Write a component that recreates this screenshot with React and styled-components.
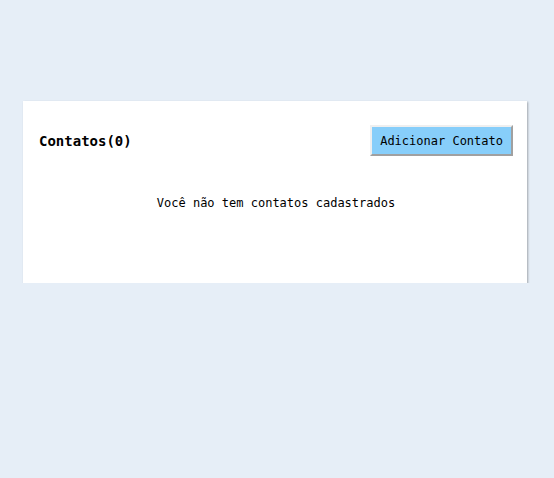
import React, { useState } from "react";
import styled, { createGlobalStyle } from "styled-components";

const GlobalStyle = createGlobalStyle`
  html, body {
    margin: 0;
    background-color: #e6eef7;
    font-family: "DejaVu Sans Mono", monospace;
  }
`;

const Page = styled.div`
  padding: 101px 27px 0 23px;
`;

const Card = styled.div`
  background-color: #ffffff;
  box-shadow: 1px 1px 2px rgba(0, 0, 0, 0.3);
  padding: 24px 14px 0 16px;
  height: 158px;
`;

const Header = styled.div`
  display: flex;
  justify-content: space-between;
  align-items: center;
`;

const Title = styled.h3`
  margin: 0;
  font-size: 14px;
  font-weight: bold;
  color: #000;
`;

const AddButton = styled.button`
  font-family: "DejaVu Sans Mono", monospace;
  font-size: 12px;
  color: #000;
  background-color: #87cefa;
  border: 2px solid;
  border-color: #efefef #a0a0a0 #a0a0a0 #efefef;
  padding: 0 8px;
  height: 31px;
  cursor: pointer;
`;

const Empty = styled.p`
  margin: 40px 0 0;
  text-align: center;
  font-size: 12px;
  color: #000;
`;

export default function App() {
  const [contatos] = useState([]);

  return (
    <>
      <GlobalStyle />
      <Page>
        <Card>
          <Header>
            <Title>Contatos({contatos.length})</Title>
            <AddButton>Adicionar Contato</AddButton>
          </Header>
          {contatos.length === 0 && (
            <Empty>Você não tem contatos cadastrados</Empty>
          )}
        </Card>
      </Page>
    </>
  );
}
